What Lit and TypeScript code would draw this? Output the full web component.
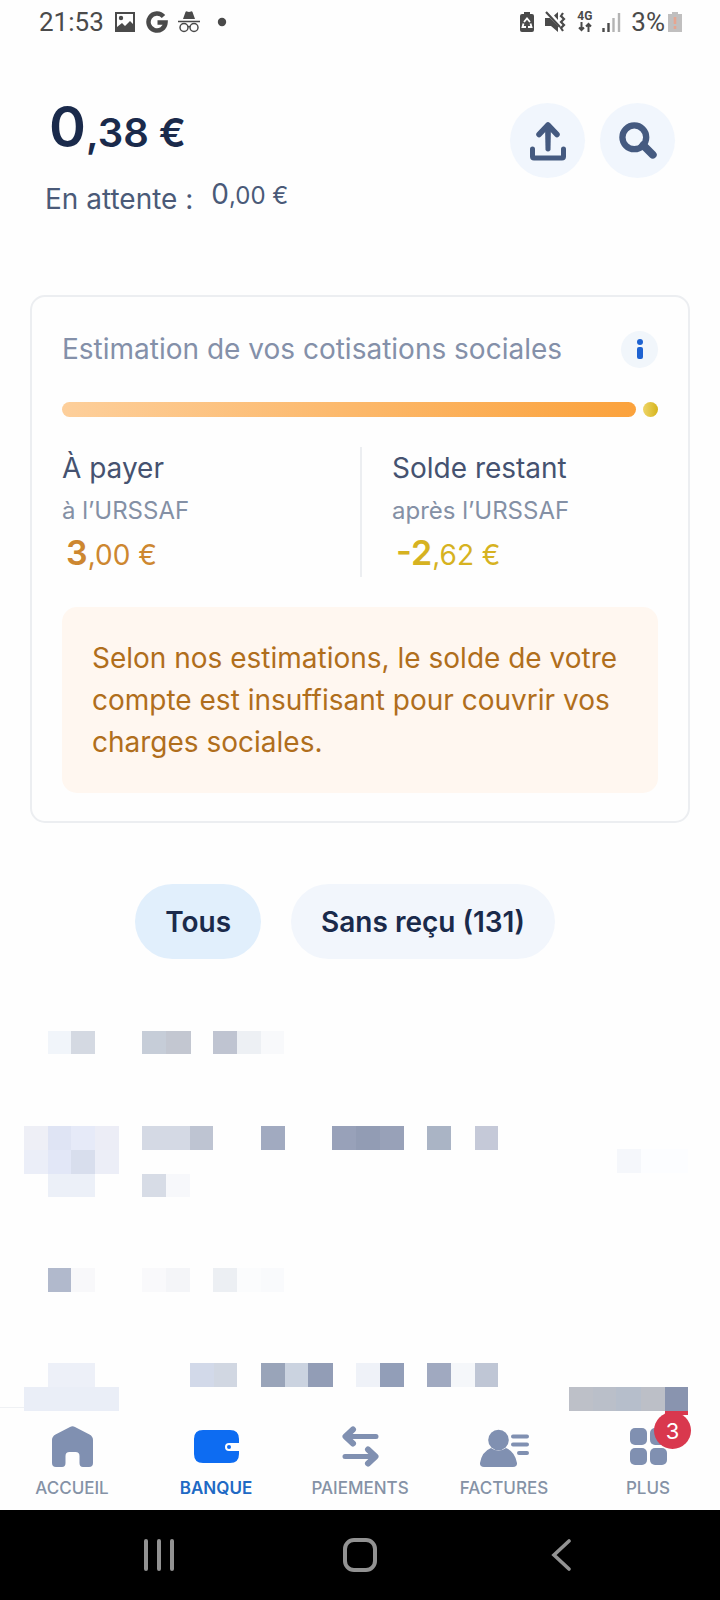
import { LitElement, html, svg, css } from "lit";
import { customElement } from "lit/decorators.js";

type Block = [x: number, y: number, w: number, h: number, fill: string];

// Redacted transactions: each block hides part of a line of text.
const BLOCKS: Block[] = [
  [48, 72, 23, 23, "#f1f5fa"], [71, 72, 24, 23, "#d4d9e2"],
  [142, 72, 24, 23, "#c6cdd8"], [166, 72, 25, 23, "#c3c7d1"],
  [213, 72, 24, 23, "#bfc4d1"], [237, 72, 24, 23, "#edf0f4"], [261, 72, 23, 23, "#f8f9fb"],

  [24, 167, 24, 24, "#eeeff6"], [48, 167, 23, 24, "#dfe4f4"], [71, 167, 24, 24, "#e6eaf8"], [95, 167, 24, 24, "#ecedf6"],
  [24, 191, 24, 24, "#ebeef8"], [48, 191, 23, 24, "#e2e7f7"], [71, 191, 24, 24, "#d8deed"], [95, 191, 24, 24, "#eceef7"],
  [48, 215, 47, 23, "#ecf0f8"],
  [142, 167, 48, 24, "#d4d9e4"], [190, 167, 23, 24, "#bec4d2"],
  [261, 167, 24, 24, "#a1aac0"],
  [332, 167, 24, 24, "#98a1b9"], [356, 167, 24, 24, "#929cb4"], [380, 167, 24, 24, "#98a1b8"],
  [427, 167, 24, 24, "#aab4c5"], [475, 167, 23, 24, "#c5c9d8"],
  [142, 215, 24, 23, "#d7dce6"], [166, 215, 24, 23, "#f7f8fb"],
  [617, 190, 24, 24, "#f5f7fb"], [641, 190, 47, 24, "#fcfdff"],

  [48, 309, 23, 24, "#b1b9cc"], [71, 309, 24, 24, "#f8f8fa"],
  [142, 309, 24, 24, "#f9f9fb"], [166, 309, 24, 24, "#f4f5f8"],
  [213, 309, 24, 24, "#eceff3"], [237, 309, 24, 24, "#fbfcfd"], [261, 309, 23, 24, "#f9fafc"],

  [48, 404, 47, 24, "#edf0f8"], [24, 428, 95, 24, "#eaeef7"],
  [190, 404, 24, 24, "#d2d9e9"], [214, 404, 23, 24, "#d1d7e2"],
  [261, 404, 24, 24, "#99a4b9"], [285, 404, 23, 24, "#cbd3e0"], [308, 404, 25, 24, "#929db6"],
  [356, 404, 24, 24, "#eff2f8"], [380, 404, 24, 24, "#929eb8"],
  [427, 404, 24, 24, "#a0a9c0"], [451, 404, 24, 24, "#f5f7fa"], [475, 404, 23, 24, "#bfc6d5"],
  [569, 428, 24, 24, "#bdc0c8"], [593, 428, 23, 24, "#babfc9"], [616, 428, 25, 24, "#b6becb"],
  [641, 428, 24, 24, "#bcbfc7"], [665, 428, 23, 24, "#8994af"],
  [665, 452, 23, 4, "#d9384e"],
];

const ICONS = {
  home: svg`<path d="M26 1q2.500-1.500 5 0l14.500 7.500q3.500 2 3.500 5.500v23q0 4-4 4h-6q-3.500 0-3.500-4v-7q0-4-4-4h-6q-4 0-4 4v7q0 4-3.500 4h-6q-4 0-4-4v-23q0-3.500 3.500-5.500z" fill="currentColor"/>`,
  wallet: svg`<path d="M15 4h27q9 0 9 9v4H41a4 4 0 0 0 0 8h10v3q0 9-9 9H15q-9 0-9-9V13q0-9 9-9z" fill="currentColor"/><circle cx="41" cy="21" r="2" fill="currentColor"/>`,
  transfer: svg`<g fill="none" stroke="currentColor" stroke-linecap="round" stroke-linejoin="round"><path d="M44 10.500H14M13 30.500h30" stroke-width="5"/><path d="M21 3.500l-7.500 7 7.500 7M36 23.500l7.500 7-7.500 7" stroke-width="6"/></g>`,
  contact: svg`<circle cx="22.500" cy="14" r="10.300" fill="currentColor"/><path d="M15 22q7.500 5 15 0 9 3.500 11 15 .3 4-4 4H8q-4.300 0-4-4 2-11.500 11-15z" fill="currentColor"/><path d="M37 10.500h14M37 18.500h14M43 27h8" stroke="currentColor" stroke-width="4" stroke-linecap="round"/>`,
  grid: svg`<g fill="currentColor"><rect x="10" y="2" width="17" height="17" rx="5"/><rect x="30" y="2" width="17" height="17" rx="5"/><rect x="10" y="22" width="17" height="17" rx="5"/><rect x="30" y="22" width="17" height="17" rx="5"/></g>`,
};

const TABS = [
  { label: "Accueil", icon: ICONS.home },
  { label: "Banque", icon: ICONS.wallet, current: true },
  { label: "Paiements", icon: ICONS.transfer },
  { label: "Factures", icon: ICONS.contact },
  { label: "Plus", icon: ICONS.grid, badge: 3 },
];

@customElement("app-root")
export class AppRoot extends LitElement {
  static styles = css`
    :host {
      display: flex;
      flex-direction: column;
      min-height: 100vh;
      background: #fefefe;
      color: #1a2a4b;
      font-family: Inter, "Liberation Sans", sans-serif;
      font-size: 28px;
      line-height: 42px;
    }
    * { box-sizing: border-box; }
    svg { display: block; flex: none; }
    p, h2 { margin: 0; font-weight: 400; font-size: inherit; }
    button { border: 0; padding: 0; font: inherit; color: inherit; cursor: pointer; }

    .status {
      display: flex;
      justify-content: space-between;
      height: 43px;
      padding: 0 38px 0 39px;
      color: #4a4a4a;
      font-family: Roboto, sans-serif;
      font-size: 26px;
    }
    .group { display: flex; align-items: center; gap: 10px; }
    .charge { display: flex; align-items: center; gap: 3px; }
    .network {
      display: flex;
      flex-direction: column;
      align-items: center;
      font-size: 12px;
      font-weight: 700;
      line-height: 11px;
    }

    .head {
      display: flex;
      justify-content: space-between;
      align-items: flex-start;
      padding: 60px 45px 0;
    }
    .unit { line-height: 0; }
    .balance { padding-left: 4px; font-size: 40px; font-weight: 600; line-height: 60px; }
    .balance .unit { font-size: 56px; }
    .pending { display: flex; gap: 18px; padding-top: 15px; color: #4a5a78; }
    .amount { font-size: 24px; line-height: 36px; }
    .amount .unit { font-size: 28px; }
    .actions { display: flex; gap: 15px; }
    .round {
      display: grid;
      place-items: center;
      width: 75px;
      height: 75px;
      border-radius: 50%;
      background: #f1f6fd;
      color: #455a80;
    }

    .card {
      margin: 75px 30px 0;
      padding: 30px 30px 28px;
      border: 2px solid #eceef1;
      border-radius: 15px;
    }
    .title { display: flex; align-items: center; justify-content: space-between; line-height: 44px; color: #8490a9; }
    .info {
      display: grid;
      place-items: center;
      width: 37px;
      height: 37px;
      border-radius: 50%;
      background: #f1f6fb;
      color: #1d62d1;
    }
    .meter { display: flex; gap: 7px; padding-top: 31px; }
    .due { flex: 1; height: 15px; border-radius: 8px; background: linear-gradient(90deg, #fdcf9b, #fba23c); }
    .rest { width: 15px; height: 15px; border-radius: 50%; background: linear-gradient(90deg, #efd568, #d5b41c); }
    .split { display: grid; grid-template-columns: 1fr 1fr; padding: 30px 0; }
    .part { color: #455270; min-height: 130px; }
    .part + .part { padding-left: 30px; border-left: 2px solid #eceef1; }
    .sub { font-size: 24px; color: #8490a5; line-height: 44px; }
    .sum { padding-left: 4px; line-height: 44px; color: #cd8730; }
    .sum .unit { font-size: 34px; font-weight: 600; }
    .sum.left-over { color: #d6b221; }
    .notice { padding: 30px; border-radius: 15px; background: #fff7f0; color: #b06e1c; }

    .filters { display: flex; justify-content: center; gap: 30px; padding: 61px 30px 0 0; }
    .pill {
      height: 75px;
      padding: 0 30px;
      border-radius: 38px;
      background: #f2f6fc;
      font-weight: 600;
    }
    .pill.on { background: #e1effc; }
    .blocks { width: 100%; overflow: visible; }

    .tabs { display: grid; grid-template-columns: repeat(5, 1fr); margin-top: auto; padding: 14px 0 11px; }
    .tab {
      position: relative;
      display: flex;
      flex-direction: column;
      align-items: center;
      gap: 9px;
      color: #8090b1;
      text-decoration: none;
      font-size: 17px;
      font-weight: 500;
      line-height: 21px;
    }
    .tab.current { color: #0d6cf2; }
    .label { text-transform: uppercase; color: #8592a6; }
    .current .label { color: #2069c4; font-weight: 600; }
    .badge {
      position: absolute;
      top: -14px;
      left: 50%;
      width: 37px;
      height: 37px;
      margin-left: 6px;
      border-radius: 50%;
      background: #d9384e;
      color: #fff;
      font-size: 22px;
      font-weight: 400;
      line-height: 39px;
      text-align: center;
    }
    .system { display: grid; grid-template-columns: repeat(3, 1fr); height: 90px; padding: 0 58px; background: #000; color: #929292; }
    .key { display: grid; place-items: center; background: none; }
  `;

  private statusBar() {
    return html`<header class="status">
      <div class="group">
        <time>21:53</time>
        <svg width="22" height="22" viewBox="0 0 22 22"><path d="M1 1h20v20H1zM3 3v13l5-4 3 3 5-5 3 3V3z" fill="currentColor" fill-rule="evenodd"/><circle cx="7" cy="7" r="2.200" fill="currentColor"/></svg>
        <svg width="22" height="22" viewBox="0 0 22 22"><path d="M17.500 5.500A8.500 8.500 0 1 0 19.500 11.500H11.500" fill="none" stroke="currentColor" stroke-width="4.500"/></svg>
        <svg width="22" height="22" viewBox="0 0 22 22"><path d="M5 8 7.500 1q.5-1 1.500-.6l2 .6 2-.6q1-.4 1.500.6L17 8z" fill="currentColor"/><g fill="none" stroke="currentColor" stroke-width="1.500"><path d="M0 10.500h22M10 16q1-.8 2 0"/><circle cx="6" cy="16.500" r="4"/><circle cx="16" cy="16.500" r="4"/></g></svg>
        <svg width="24" height="10" viewBox="0 0 24 10"><circle cx="12" cy="5" r="4.200" fill="currentColor"/></svg>
      </div>
      <div class="group">
        <svg width="14" height="22" viewBox="0 0 14 22"><path d="M4 1h6v2h2q2 0 2 2v14q0 2-2 2H2q-2 0-2-2V5q0-2 2-2h2z" fill="currentColor"/><path d="M4 11 7 7.500l3 3.500M3.500 12.500 2.500 16H6M10.500 12.500l1 3.500H8" fill="none" stroke="#fff" stroke-width="1.800"/></svg>
        <svg width="23" height="22" viewBox="0 0 23 22"><path d="M1 7h5l8 8v6l-7-6H1zM10 4.500 14 1v8z" fill="currentColor"/><path d="M2 1l14 15M19 2l-2 3 3 3-3 3 3 3-3 3 2 3" fill="none" stroke="currentColor" stroke-width="2.200"/></svg>
        <div class="network">4G
          <svg width="14" height="10" viewBox="0 0 14 10"><path d="M3.500 0v8M1 5.500 3.500 8 6 5.500M10.500 10V2M8 4.500 10.500 2 13 4.500" fill="none" stroke="currentColor" stroke-width="2"/></svg>
        </div>
        <svg width="19" height="22" viewBox="0 0 19 22"><path d="M1.500 17v4M6.500 12v9" stroke="currentColor" stroke-width="2.400"/><path d="M11.500 7v14M17 2v19" stroke="#b4b4b4" stroke-width="2.400"/></svg>
        <div class="charge">3%
          <svg width="14" height="22" viewBox="0 0 14 22"><path d="M4 1h6v2h4v18H0V3h4z" fill="#c0bfbf"/><path d="M7 6v7M7 15v3" stroke="#e6a590" stroke-width="2.600"/></svg>
        </div>
      </div>
    </header>`;
  }

  private account() {
    return html`<section class="head">
      <div>
        <p class="balance"><span class="unit">0</span>,38 €</p>
        <div class="pending"><span>En attente :</span><span class="amount"><span class="unit">0</span>,00 €</span></div>
      </div>
      <div class="actions">
        <button class="round" aria-label="Exporter">
          <svg width="38" height="40" viewBox="0 0 38 40"><g fill="none" stroke="currentColor" stroke-linecap="round" stroke-linejoin="round"><path d="M3.500 28v7.500q0 1.500 1.500 1.500h28q1.500 0 1.500-1.500V28" stroke-width="5"/><path d="M10 13.500 19 4l9 9.500" stroke-width="5.500"/></g><path d="M16 4h6l-.5 25q-2.500 3-5 0z" fill="currentColor"/></svg>
        </button>
        <button class="round" aria-label="Rechercher">
          <svg width="40" height="40" viewBox="0 0 38 38"><g fill="none" stroke="currentColor"><circle cx="15.500" cy="15.500" r="11.300" stroke-width="6"/><path d="m24 23 9 9" stroke-width="7.500" stroke-linecap="round"/></g></svg>
        </button>
      </div>
    </section>`;
  }

  private contributions() {
    return html`<section class="card">
      <div class="title">
        <h2>Estimation de vos cotisations sociales</h2>
        <button class="info" aria-label="Informations">
          <svg width="8" height="22" viewBox="0 0 8 22"><circle cx="4" cy="4" r="3" fill="currentColor"/><rect x="1" y="9" width="6" height="12" rx="2" fill="currentColor"/></svg>
        </button>
      </div>
      <div class="meter"><div class="due"></div><div class="rest"></div></div>
      <div class="split">
        <div class="part">
          <p>À payer</p>
          <p class="sub">à l’URSSAF</p>
          <p class="sum"><span class="unit">3</span>,00 €</p>
        </div>
        <div class="part">
          <p>Solde restant</p>
          <p class="sub">après l’URSSAF</p>
          <p class="sum left-over"><span class="unit">-2</span>,62 €</p>
        </div>
      </div>
      <p class="notice">Selon nos estimations, le solde de votre compte est insuffisant pour couvrir vos charges sociales.</p>
    </section>`;
  }

  render() {
    return html`
      ${this.statusBar()}
      ${this.account()}
      ${this.contributions()}
      <div class="filters">
        <button class="pill on" aria-pressed="true">Tous</button>
        <button class="pill" aria-pressed="false">Sans reçu (131)</button>
      </div>
      <svg class="blocks" viewBox="0 0 720 451" aria-hidden="true">
        <path d="M0 448.500h41" stroke="#eff1f4"/>
        ${BLOCKS.map(([x, y, w, h, fill]) => svg`<rect x=${x} y=${y} width=${w} height=${h} fill=${fill} shape-rendering="crispEdges"/>`)}
      </svg>
      <nav class="tabs">
        ${TABS.map((t) => html`<a class="tab ${t.current ? "current" : ""}" href="#">
          <svg width="57" height="43" viewBox="0 0 57 43">${t.icon}</svg>
          <span class="label">${t.label}</span>
          ${t.badge ? html`<span class="badge">${t.badge}</span>` : ""}
        </a>`)}
      </nav>
      <div class="system">
        <button class="key" aria-label="Applications récentes"><svg width="30" height="32" viewBox="0 0 30 32"><path d="M2 2v28M15 2v28M28 2v28" stroke="currentColor" stroke-width="4" stroke-linecap="round"/></svg></button>
        <button class="key" aria-label="Accueil"><svg width="34" height="34" viewBox="0 0 34 34"><rect x="2" y="2" width="30" height="30" rx="9" fill="none" stroke="currentColor" stroke-width="4"/></svg></button>
        <button class="key" aria-label="Retour"><svg width="20" height="32" viewBox="0 0 20 32"><path d="M18 2 3 16l15 14" fill="none" stroke="currentColor" stroke-width="3.600" stroke-linecap="round"/></svg></button>
      </div>
    `;
  }
}
